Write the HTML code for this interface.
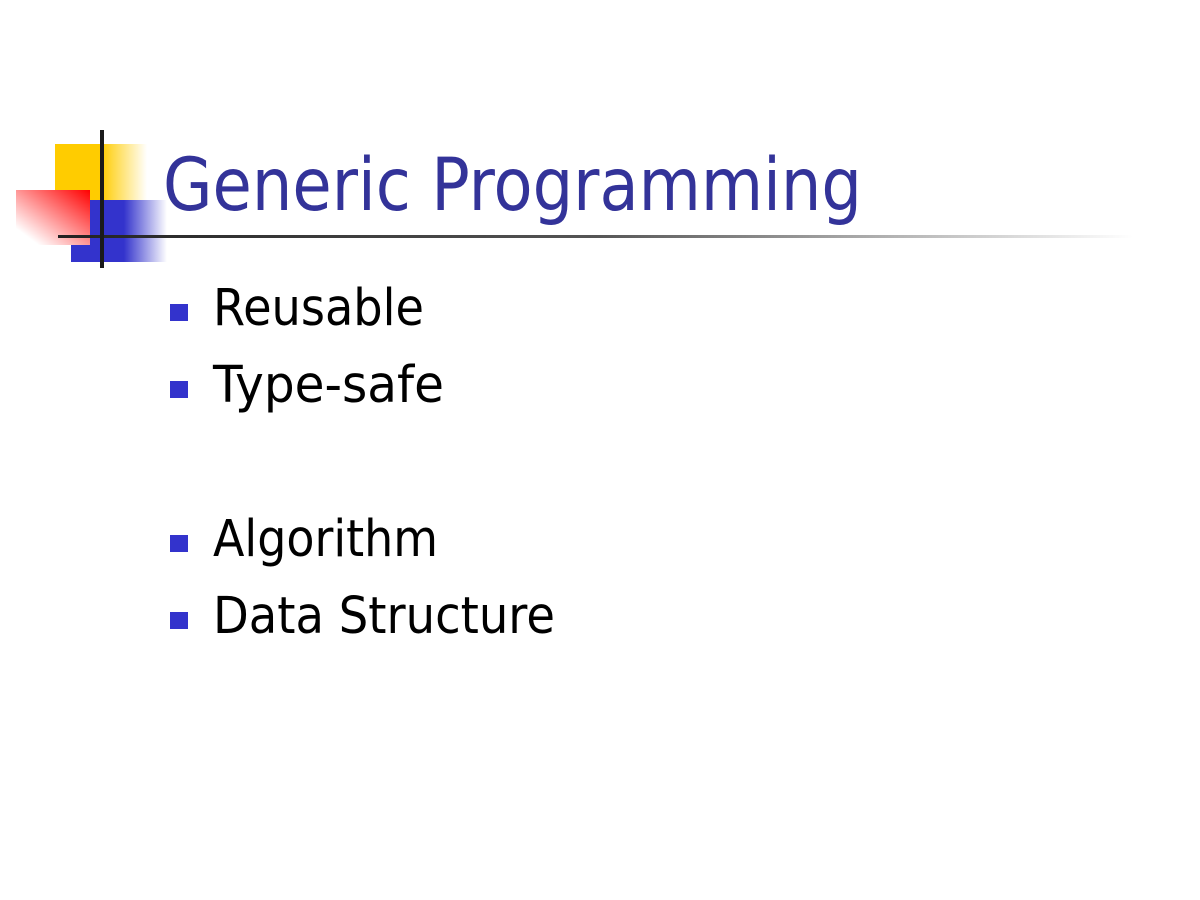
<!DOCTYPE html>
<html><head><style>
html,body{margin:0;padding:0;background:#fff;width:1200px;height:900px;overflow:hidden}
</style></head><body>
<svg width="1200" height="900" viewBox="0 0 1200 900" xmlns="http://www.w3.org/2000/svg">
<defs>
<linearGradient id="yg" x1="0" x2="1" y1="0" y2="0">
<stop offset="0" stop-color="#ffcc00"/><stop offset="0.5" stop-color="#ffcc00"/><stop offset="1" stop-color="#ffcc00" stop-opacity="0"/>
</linearGradient>
<linearGradient id="bg" x1="0" x2="1" y1="0" y2="0">
<stop offset="0" stop-color="#3333cc"/><stop offset="0.55" stop-color="#3333cc"/><stop offset="1" stop-color="#3333cc" stop-opacity="0"/>
</linearGradient>
<linearGradient id="rg" x1="1" y1="0" x2="0" y2="1">
<stop offset="0" stop-color="#ff0000"/><stop offset="0.85" stop-color="#ff0000" stop-opacity="0"/>
</linearGradient>
<linearGradient id="lg" x1="0" x2="1" y1="0" y2="0">
<stop offset="0" stop-color="#222"/><stop offset="0.5" stop-color="#555"/><stop offset="1" stop-color="#555" stop-opacity="0"/>
</linearGradient>
</defs>
<rect x="55" y="144" width="92" height="56" fill="url(#yg)"/>
<rect x="71" y="200" width="96" height="62" fill="url(#bg)"/>
<rect x="16" y="190" width="74" height="55" fill="#fff"/>
<rect x="16" y="190" width="74" height="55" fill="url(#rg)"/>
<rect x="58" y="235" width="1075" height="3" fill="url(#lg)"/>
<rect x="100" y="130" width="4" height="138" fill="#1a1a1a"/>
<g font-family="DejaVu Sans, sans-serif">
<text x="163" y="210" font-size="73" fill="#333399" textLength="699" lengthAdjust="spacingAndGlyphs">Generic Programming</text>
<g font-size="51" fill="#000">
<text x="213" y="325" textLength="211" lengthAdjust="spacingAndGlyphs">Reusable</text>
<text x="213" y="402" textLength="231" lengthAdjust="spacingAndGlyphs">Type-safe</text>
<text x="213" y="556" textLength="225" lengthAdjust="spacingAndGlyphs">Algorithm</text>
<text x="213" y="633" textLength="342" lengthAdjust="spacingAndGlyphs">Data Structure</text>
</g>
</g>
<g fill="#3333cc">
<rect x="170" y="304" width="18" height="17"/>
<rect x="170" y="381" width="18" height="17"/>
<rect x="170" y="535" width="18" height="17"/>
<rect x="170" y="612" width="18" height="17"/>
</g>
</svg>
</body></html>
